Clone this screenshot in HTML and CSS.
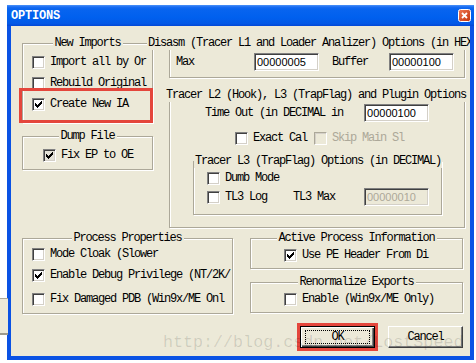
FILE: index.html
```html
<!DOCTYPE html>
<html lang="en">
<head>
    <meta charset="UTF-8">
    <title>OPTIONS</title>
    <link rel="stylesheet" href="styles.css">
</head>
<body>
    <div class="behind"></div>

    <div class="window">
        <div class="titlebar">
            <span class="title">OPTIONS</span>
            <span class="close">
                <svg width="13" height="13" viewBox="0 0 13 13">
                    <defs>
                        <linearGradient id="cg" x1="0" y1="0" x2="1" y2="1">
                            <stop offset="0" stop-color="#f07a55"/>
                            <stop offset="1" stop-color="#c2330c"/>
                        </linearGradient>
                    </defs>
                    <rect x="0.5" y="0.5" width="12" height="12" rx="2" fill="url(#cg)" stroke="#fff"/>
                    <path d="M4 4 L9 9 M9 4 L4 9" stroke="#fff" stroke-width="1.8"/>
                </svg>
            </span>
        </div>

        <div class="client">
            <div class="top">
                <!-- left column -->
                <div class="col-left">
                    <div class="group g-imports">
                        <span class="caption">New Imports</span>
                        <label class="check"><span class="box"></span>Import all by Or</label>
                        <label class="check"><span class="box"></span>Rebuild Original</label>
                        <label class="check marked"><span class="box on"></span>Create New IA</label>
                    </div>
                    <div class="group g-dump">
                        <span class="caption">Dump File</span>
                        <label class="check"><span class="box on grey"></span>Fix EP to OE</label>
                    </div>
                </div>

                <!-- right column -->
                <div class="col-right">
                    <div class="group g-disasm">
                        <span class="caption wide c-disasm">Disasm (Tracer L1 and Loader Analizer) Options (in HEX)</span>
                        <div class="field-row">
                            <span class="lbl w-max">Max</span>
                            <span class="input">00000005</span>
                            <span class="lbl w-buffer">Buffer</span>
                            <span class="input">00000100</span>
                        </div>
                    </div>

                    <div class="group g-tracer">
                        <span class="caption wide c-tracer">Tracer L2 (Hook), L3 (TrapFlag) and Plugin Options</span>
                        <div class="field-row timeout">
                            <span class="lbl">Time Out (in DECIMAL in</span>
                            <span class="input">00000100</span>
                        </div>
                        <div class="check-row">
                            <label class="check"><span class="box"></span>Exact Cal</label>
                            <label class="check disabled"><span class="box"></span>Skip Main Sl</label>
                        </div>
                        <div class="group g-l3">
                            <span class="caption wide c-l3">Tracer L3 (TrapFlag) Options (in DECIMAL)</span>
                            <label class="check"><span class="box"></span>Dumb Mode</label>
                            <div class="field-row tl3">
                                <label class="check w-log"><span class="box"></span>TL3 Log</label>
                                <span class="lbl w-tl3">TL3 Max</span>
                                <span class="input disabled">00000010</span>
                            </div>
                        </div>
                    </div>
                </div>
            </div>

            <div class="bottom">
                <div class="group g-process">
                    <span class="caption">Process Properties</span>
                    <label class="check"><span class="box"></span>Mode Cloak (Slower</label>
                    <label class="check"><span class="box on"></span>Enable Debug Privilege (NT/2K/</label>
                    <label class="check last"><span class="box"></span>Fix Damaged PDB (Win9x/ME Onl</label>
                </div>

                <div class="bottom-right">
                    <div class="group g-small">
                        <span class="caption">Active Process Information</span>
                        <label class="check"><span class="box on"></span>Use PE Header From Di</label>
                    </div>
                    <div class="group g-small">
                        <span class="caption">Renormalize Exports</span>
                        <label class="check"><span class="box"></span>Enable (Win9x/ME Only)</label>
                    </div>
                    <div class="buttons">
                        <button class="btn default"><span class="focus">OK</span></button>
                        <button class="btn">Cancel</button>
                    </div>
                </div>
            </div>

            <div class="watermark">http://blog.csdn.net/LostSpeed</div>
        </div>
    </div>
</body>
</html>
```

FILE: styles.css
```css
* { margin: 0; padding: 0; box-sizing: border-box; }
body {
    width: 476px;
    height: 363px;
    overflow: hidden;
    position: relative;
    background: #fff;
    padding: 5px 0 0 7px;
    font-family: "Liberation Mono", monospace;
    font-size: 12px;
    letter-spacing: -1.2px;
    color: #000;
}

/* bit of another window peeking out on the left */
.behind {
    position: absolute;
    left: 0;
    top: 298px;
    width: 8px;
    height: 37px;
    background: #ece9d8;
    border-top: 1px solid #aca899;
    border-bottom: 2px solid #9d9a8c;
}

.window {
    width: 467px;
    height: 355px;
    display: flex;
    flex-direction: column;
    border: 4px solid #0a52e4;
    border-top: 0;
}

.titlebar {
    margin: 0 -4px;
    height: 21px;
    display: flex;
    align-items: center;
    justify-content: space-between;
    padding: 0 3px 0 4px;
    background: linear-gradient(to bottom, #4b93f7 0, #1a6cf2 2px, #0864ef 4px, #0060ee 60%, #0358e6 88%, #0348d6 100%);
}
.title {
    color: #fff;
    font-weight: bold;
    letter-spacing: -0.2px;
    line-height: 14px;
}
.close { display: flex; }

.client {
    flex: 1;
    position: relative;
    overflow: hidden;
    background: #ece9d8;
    padding: 17px 0 0 11px;
}

.top { display: flex; gap: 16px; }
.col-left {
    width: 131px;
    display: flex;
    flex-direction: column;
    gap: 13px;
}
.col-right {
    width: 296px;
    display: flex;
    flex-direction: column;
    gap: 17px;
}

/* group boxes */
.group {
    position: relative;
    border: 1px solid #aca899;
    box-shadow: inset 1px 1px #fff, 1px 1px #fff;
}
.caption {
    position: absolute;
    top: -8px;
    left: 50%;
    transform: translateX(-50%);
    padding: 0 2px;
    line-height: 14px;
    background: #ece9d8;
    white-space: nowrap;
}
.caption.wide { transform: none; padding: 0 1px; }
.c-disasm { left: -23px; }
.c-tracer { left: -5px; }
.c-l3 { left: 0; }

.g-imports {
    height: 80px;
    padding: 12px 0 0 9px;
    display: flex;
    flex-direction: column;
    gap: 8px;
}
.g-dump { height: 34px; padding: 12px 0 0 20px; }

.g-disasm { height: 35px; padding: 9px 0 0 6px; }
.g-tracer { height: 133px; padding-top: 8px; }
.g-l3 {
    width: 249px;
    height: 54px;
    margin: 16px 0 0 23px;
    padding: 10px 0 0 13px;
}

/* checkboxes */
.check {
    display: flex;
    align-items: center;
    gap: 5px;
    height: 13px;
    line-height: 13px;
    white-space: nowrap;
}
.box {
    position: relative;
    flex: none;
    width: 13px;
    height: 13px;
    background: #fff;
    border: 1px solid;
    border-color: #808080 #fff #fff #808080;
    box-shadow: inset 1px 1px #404040, inset -1px -1px #d4d0c8;
}
.box.grey { background: #e4e2d8; }
.box.on::after {
    content: "";
    position: absolute;
    left: 2px;
    top: 2px;
    width: 7px;
    height: 7px;
    background: linear-gradient(#000, #000) no-repeat;
    -webkit-mask: url("data:image/svg+xml;utf8,<svg xmlns='http://www.w3.org/2000/svg' width='7' height='7'><path d='M0 2h1v1h1v1h1v-1h1v-1h1v-1h1v-1h1v3h-1v1h-1v1h-1v1h-1v1h-1v-1h-1v-1h-1z'/></svg>");
}
.check.disabled { color: #aca899; }
.check.disabled .box {
    background: #ece9d8;
    border-color: #aca899 #fff #fff #aca899;
    box-shadow: inset 1px 1px #d4d0c8;
}

.marked { position: relative; }
.marked::after {
    content: "";
    position: absolute;
    left: -13px;
    top: -10px;
    width: 128px;
    height: 29px;
    border: 3px solid #e4463c;
}

/* text fields */
.field-row { display: flex; align-items: center; height: 18px; }
.lbl { white-space: nowrap; }
.w-max { width: 78px; }
.w-buffer { width: 57px; margin-left: 13px; }
.input {
    width: 65px;
    height: 18px;
    padding: 1px 0 0 2px;
    background: #fff;
    border: 1px solid;
    border-color: #808080 #fff #fff #808080;
    box-shadow: inset 1px 1px #404040, inset -1px -1px #d4d0c8;
    font-family: "Liberation Sans", Arial, sans-serif;
    font-size: 11px;
    letter-spacing: 0;
    line-height: 14px;
}
.input.disabled { background: #ece9d8; color: #aca899; }

.timeout { padding-left: 35px; }
.timeout .input { margin-left: 21px; }
.check-row { display: flex; gap: 7px; margin: 10px 0 0 65px; }
.tl3 { margin-top: 3px; }
.w-log { width: 86px; }
.w-tl3 { width: 71px; }

/* bottom part */
.bottom { display: flex; gap: 17px; margin-top: 10px; }
.g-process {
    width: 211px;
    height: 76px;
    padding: 9px 0 0 9px;
    display: flex;
    flex-direction: column;
    gap: 8px;
}
.g-process .last { margin-top: 3px; }
.bottom-right {
    width: 213px;
    display: flex;
    flex-direction: column;
    gap: 13px;
}
.g-small { height: 31px; padding: 10px 0 0 33px; }

.buttons { display: flex; gap: 13px; padding-left: 50px; }
.btn {
    width: 75px;
    height: 22px;
    display: flex;
    align-items: center;
    justify-content: center;
    background: #ece9d8;
    border: 1px solid;
    border-color: #fff #404040 #404040 #fff;
    box-shadow: inset -1px -1px #808080;
    font-family: inherit;
    font-size: 12px;
    letter-spacing: -1.2px;
    color: #000;
}
.btn.default {
    border: 1px solid #000;
    box-shadow: inset 1px 1px #fff, inset -1px -1px #404040, inset -2px -2px #808080;
    outline: 3px solid #e4463c;
}
.focus {
    width: 65px;
    height: 14px;
    line-height: 13px;
    text-align: center;
    border: 1px dotted #000;
}

.watermark {
    position: absolute;
    left: 152px;
    top: 307px;
    font-size: 16.7px;
    letter-spacing: 0;
    line-height: 20px;
    color: rgba(0, 0, 0, 0.13);
    white-space: nowrap;
    pointer-events: none;
}
```
